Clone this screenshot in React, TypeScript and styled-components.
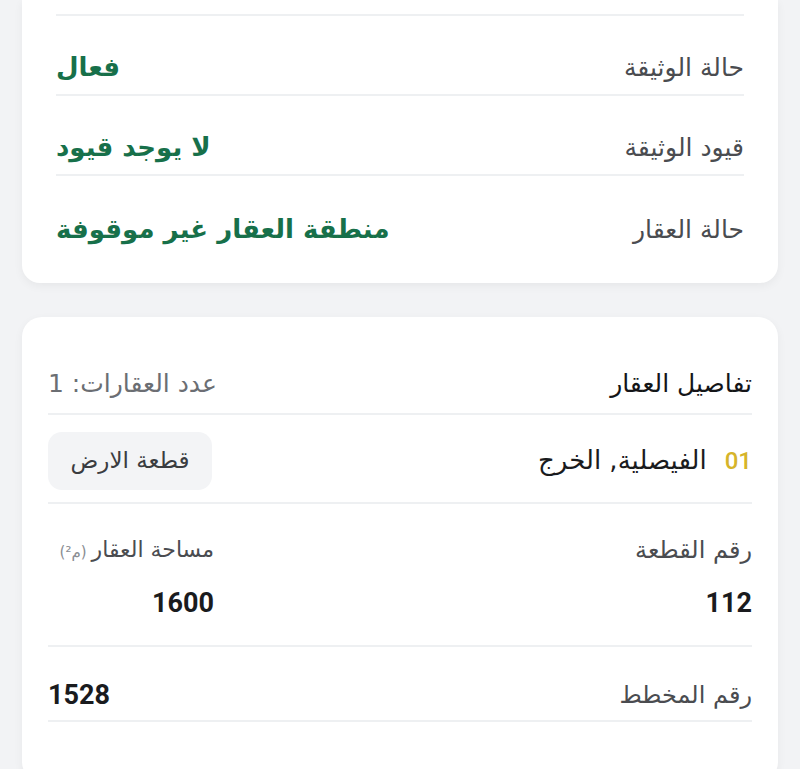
import React from 'react';
import styled, { createGlobalStyle } from 'styled-components';

const GlobalStyle = createGlobalStyle`
  html, body {
    margin: 0;
    padding: 0;
    background: #f2f3f5;
  }
  body {
    font-family: "DejaVu Sans", "Noto Sans", sans-serif;
    line-height: 1.2;
  }
`;

const Page = styled.div`
  direction: rtl;
  padding: 0 22px;
  display: flex;
  flex-direction: column;
  gap: 34px;
`;

const Card = styled.section<{ $cut?: boolean }>`
  background: #ffffff;
  border-radius: ${(p) => (p.$cut ? '0 0 18px 18px' : '20px')};
  box-shadow: 0 3px 10px rgba(0, 0, 0, 0.05);
  padding: ${(p) => (p.$cut ? '14px 34px 27px' : '0 26px 60px')};
`;

const Rule = styled.div`
  height: 2px;
  background: #eef0f2;
`;

const InfoRow = styled.div<{ $last?: boolean }>`
  height: 80px;
  display: flex;
  align-items: flex-end;
  justify-content: space-between;
  padding-bottom: 11px;
  box-sizing: border-box;
  border-bottom: ${(p) => (p.$last ? 'none' : '2px solid #eef0f2')};
`;

const Label = styled.span<{ $size?: number }>`
  font-size: ${(p) => p.$size ?? 24}px;
  color: #4a4c50;
  white-space: nowrap;
`;

const GreenValue = styled.span`
  font-size: 26px;
  font-weight: 700;
  color: #17704a;
`;

const Header = styled.div`
  display: flex;
  align-items: center;
  justify-content: space-between;
  padding: 52px 0 14px;
  border-bottom: 2px solid #eef0f2;
`;

const Title = styled.h2`
  margin: 0;
  font-size: 25px;
  font-weight: 500;
  line-height: 1.2;
  color: #141518;
`;

const Count = styled.span`
  font-size: 25px;
  color: #6b6e73;
`;

const PropertyRow = styled.div`
  display: flex;
  align-items: center;
  justify-content: space-between;
  padding: 17px 0 12px;
  border-bottom: 2px solid #eef0f2;
`;

const PropertyName = styled.div`
  display: flex;
  align-items: center;
  gap: 18px;
  font-size: 26px;
  color: #1a1b1e;
`;

const Index = styled.span`
  font-family: "Roboto", "DejaVu Sans", sans-serif;
  font-size: 24px;
  color: #d6b42a;
  font-weight: 500;
`;

const Chip = styled.span`
  width: 164px;
  height: 58px;
  border-radius: 14px;
  background: #f3f4f6;
  display: flex;
  align-items: center;
  justify-content: center;
  font-size: 23px;
  color: #3a3c40;
`;

const DetailGrid = styled.div`
  display: grid;
  grid-template-columns: 1fr 166px;
  align-items: center;
  row-gap: 22px;
  padding: 32px 0 26px;
  border-bottom: 2px solid #eef0f2;
`;

const Number = styled.span`
  font-family: "Roboto", "DejaVu Sans", sans-serif;
  font-size: 27px;
  font-weight: 700;
  color: #1a1b1e;
`;

const Unit = styled.span`
  font-size: 15px;
  color: #8a8d92;
  margin-right: 5px;
`;

const PlanRow = styled.div`
  display: flex;
  align-items: center;
  justify-content: space-between;
  padding: 32px 0 8px;
  border-bottom: 2px solid #eef0f2;
`;

const statusRows = [
  { label: 'حالة الوثيقة', value: 'فعال' },
  { label: 'قيود الوثيقة', value: 'لا يوجد قيود' },
  { label: 'حالة العقار', value: 'منطقة العقار غير موقوفة' },
];

export default function App() {
  return (
    <>
      <GlobalStyle />
      <Page>
        <Card $cut>
          <Rule />
          {statusRows.map((r, i) => (
            <InfoRow key={r.label} $last={i === statusRows.length - 1}>
              <Label $size={25}>{r.label}</Label>
              <GreenValue>{r.value}</GreenValue>
            </InfoRow>
          ))}
        </Card>

        <Card>
          <Header>
            <Title>تفاصيل العقار</Title>
            <Count>عدد العقارات: 1</Count>
          </Header>
          <PropertyRow>
            <PropertyName>
              <Index>01</Index>
              <span>الفيصلية, الخرج</span>
            </PropertyName>
            <Chip>قطعة الارض</Chip>
          </PropertyRow>
          <DetailGrid>
            <Label>رقم القطعة</Label>
            <Label $size={22}>
              مساحة العقار<Unit>(م²)</Unit>
            </Label>
            <Number>112</Number>
            <Number>1600</Number>
          </DetailGrid>
          <PlanRow>
            <Label>رقم المخطط</Label>
            <Number>1528</Number>
          </PlanRow>
        </Card>
      </Page>
    </>
  );
}
